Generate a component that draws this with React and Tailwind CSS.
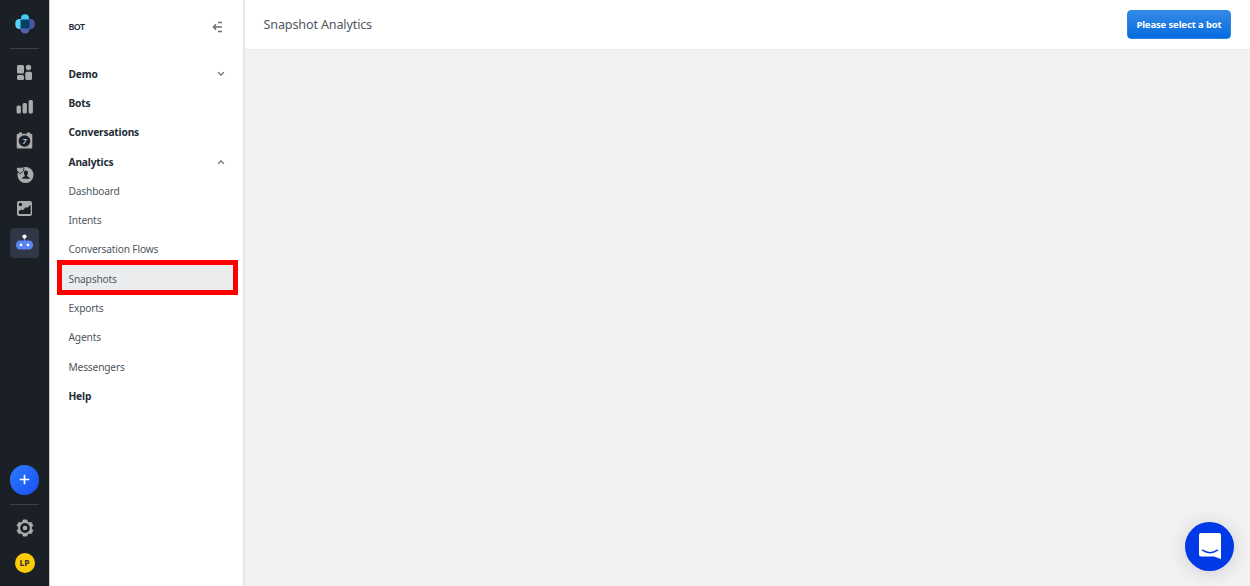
import React, { useState } from 'react';

const menu = [
	{ name: 'Demo', bold: true, arrow: 'down' },
	{ name: 'Bots', bold: true },
	{ name: 'Conversations', bold: true },
	{ name: 'Analytics', bold: true, arrow: 'up' },
	{ name: 'Dashboard' },
	{ name: 'Intents' },
	{ name: 'Conversation Flows' },
	{ name: 'Snapshots' },
	{ name: 'Exports' },
	{ name: 'Agents' },
	{ name: 'Messengers' },
	{ name: 'Help', bold: true },
];

function Logo() {
	return (
		<svg width="20" height="20" viewBox="0 0 20 20">
			<path d="M6 6V4.500Q6 .3 10 .3T14 4.500V6z" fill="#45c8f5" />
			<path d="M6 5H4.500Q.2 5 .2 10T4.500 15H6z" fill="#5ad0f4" />
			<path d="M14 5h1.500Q19.800 5 19.800 10T15.500 15H14z" fill="#4a55a5" />
			<path d="M5.500 14v1.500Q6 19.500 10 19.500T14.500 15.500V14z" fill="#5262b5" />
			<rect x="5.500" y="5.500" width="9" height="9" rx="1" fill="#044066" />
		</svg>
	);
}

function DashboardIcon() {
	return (
		<svg width="17" height="17" viewBox="0 0 17 17" fill="#a9abad">
			<rect x="1" y="1" width="7" height="8.500" rx="1.500" />
			<circle cx="12.500" cy="3.500" r="2.700" />
			<rect x="1" y="11" width="7" height="5" rx="1.500" />
			<rect x="9.300" y="7.800" width="6.700" height="8.200" rx="1.500" />
		</svg>
	);
}

function BarsIcon() {
	return (
		<svg width="17" height="17" viewBox="0 0 17 17" fill="#a9abad">
			<rect x=".6" y="7.500" width="4.300" height="8" rx="1.500" />
			<rect x="6.600" y="5" width="4.300" height="10.500" rx="1.500" />
			<rect x="12.600" y="2" width="4.300" height="13.500" rx="1.500" />
		</svg>
	);
}

function CalendarIcon() {
	return (
		<span className="relative flex h-[17px] w-[17px] items-center justify-center">
			<svg className="absolute inset-0" width="17" height="17" viewBox="0 0 17 17">
				<path
					d="M2 1.800h1V.500h3v1.300h5V.500h3v1.300h1q1.300 0 1.300 1.300v12.100q0 1.300-1.300 1.300H2q-1.300 0-1.300-1.300V3.100Q.7 1.800 2 1.800z"
					fill="#a9abad"
				/>
				<circle cx="8.500" cy="9" r="5.800" fill="#1b2027" />
			</svg>
			<span className="relative top-[0.5px] text-[7.5px] leading-none font-bold text-[#a9bdd5] italic">7</span>
		</span>
	);
}

function AudienceIcon() {
	return (
		<svg width="18" height="18" viewBox="0 0 18 18">
			<circle cx="9.500" cy="9" r="8" fill="#a9abad" />
			<path
				d="M9.900 4.500q2.100 0 2.100 2.300 0 1.700-1 2.700v.7l1.700.8q1 .5 1 1.800H6.100q0-1.300 1-1.800l1.700-.8v-.7q-1-1-1-2.700 0-2.300 2.100-2.300z"
				fill="#1b2027"
			/>
			<path
				d="M4.200 7.800L.9 4.800Q-.3 2.400 1.700 1.200 3.300.8 4.200 2q.9-1.200 2.500-.8Q8.700 2.400 7.500 4.800z"
				fill="#a9abad"
				stroke="#1b2027"
				strokeWidth=".9"
			/>
		</svg>
	);
}

function PictureIcon() {
	return (
		<svg width="17" height="17" viewBox="0 0 17 17">
			<rect x="1" y="1" width="15" height="15" rx="2" fill="#a9abad" />
			<path d="M2.800 11L5.500 9.500l1.500.8 2.500-3 1.700.4 3.500-3V13q0 1-1 1H3.800q-1 0-1-1z" fill="#1b2027" />
			<circle cx="4.400" cy="4.500" r="1.700" fill="#1b2027" />
		</svg>
	);
}

function RobotIcon() {
	return (
		<svg width="17" height="17" viewBox="0 0 17 17">
			<rect x="7.900" y="3" width="1.200" height="5" fill="#5f8af8" />
			<circle cx="8.500" cy="2.600" r="2.100" fill="#fff" />
			<rect x=".7" y="6.400" width="15.600" height="9.200" rx="3" fill="#5983f7" />
			<rect x="0" y="8.600" width="17" height="5" rx="1.500" fill="#5983f7" />
			<circle cx="5" cy="10.900" r="1.300" fill="#fff" />
			<circle cx="12" cy="10.900" r="1.300" fill="#fff" />
		</svg>
	);
}

function GearIcon() {
	return (
		<svg width="18" height="18" viewBox="0 0 18 18">
			<path
				d="M7.200 1h3.600l.6 2.100 1.500.9 2.200-.6 1.800 3.100L15.400 8.100v1.800l1.500 1.600-1.800 3.100-2.200-.6-1.500.9-.6 2.100H7.200l-.6-2.100-1.500-.9-2.200.6-1.800-3.100 1.500-1.600V8.100L1.100 6.500l1.800-3.100 2.200.6 1.500-.9z"
				fill="#a9abad"
				stroke="#a9abad"
				strokeLinejoin="round"
			/>
			<circle cx="9" cy="9" r="3.600" fill="none" stroke="#1b2027" strokeWidth="2.600" />
		</svg>
	);
}

const railIcons = [DashboardIcon, BarsIcon, CalendarIcon, AudienceIcon, PictureIcon, RobotIcon];

function Rail() {
	return (
		<nav className="flex h-full w-[49px] shrink-0 flex-col items-center bg-[#1b2027] pt-[14px] pb-[13px]">
			<Logo />
			<div className="mt-[14px] h-px w-[29px] shrink-0 bg-[#3c4047]"></div>
			<div className="mt-[9px] flex flex-col gap-[4.9px]">
				{railIcons.map((Icon, i) => (
					<button
						key={i}
						className={`flex h-[29.2px] w-[29px] items-center justify-center rounded ${i === 5 ? 'bg-[#303745]' : ''}`}
					>
						<Icon />
					</button>
				))}
			</div>
			<button className="mt-auto flex h-[29.500px] w-[29.500px] shrink-0 items-center justify-center rounded-full bg-linear-to-br from-[#2e7bff] to-[#1b4df0]">
				<svg width="11" height="11" viewBox="0 0 11 11" stroke="#fff" strokeWidth="1.600">
					<path d="M5.500 .7v9.600M.7 5.500h9.600" />
				</svg>
			</button>
			<div className="mt-[9.500px] h-px w-[29px] shrink-0 bg-[#3c4047]"></div>
			<button className="mt-[14px]">
				<GearIcon />
			</button>
			<div className="mt-4 flex h-5 w-5 shrink-0 items-center justify-center rounded-full bg-[#fccb0a] text-[8.5px] leading-none font-bold text-[#333]">
				LP
			</div>
		</nav>
	);
}

function Chevron({ up }) {
	return (
		<svg
			width="8"
			height="6"
			viewBox="0 0 8 6"
			fill="none"
			stroke="#606468"
			strokeWidth="1.200"
			className={up ? 'rotate-180' : ''}
		>
			<path d="M1 1.200l3 3 3-3" />
		</svg>
	);
}

function Sidebar({ selected, setSelected }) {
	return (
		<aside className="flex h-full w-[196px] shrink-0 flex-col border-r-2 border-l border-r-[#e6e7e9] border-l-[#c9cbcd] bg-white">
			<header className="flex h-[54px] shrink-0 items-center justify-between pr-[20px] pl-[18.5px]">
				<p className="pt-px text-[8.8px] font-semibold tracking-[-0.5px] text-[#222b36]">BOT</p>
				<svg width="11" height="12" viewBox="0 0 11 12" fill="none" stroke="#6b6e72" strokeWidth="1.500">
					<path d="M6 1.500h4M2 6h8M6 10.500h4M4 3.300L1.500 6 4 8.700" />
				</svg>
			</header>
			<div className="mt-[5.600px] flex flex-col pr-[9px] pl-[10px]">
				{menu.map(item => (
					<button
						key={item.name}
						onClick={() => setSelected(item.name)}
						className={`flex h-[29.28px] items-center justify-between pr-[9px] pl-[8.5px] text-left whitespace-nowrap ${
							item.bold
								? 'text-[10.2px] font-bold tracking-[-0.17px] text-[#222b36]'
								: 'text-[10.2px] tracking-[-0.17px] text-[#50565e]'
						} ${selected === item.name ? 'bg-[#ebecee]' : ''}`}
					>
						<span className="pt-[0.6px]">{item.name}</span>
						{item.arrow && <Chevron up={item.arrow === 'up'} />}
					</button>
				))}
			</div>
		</aside>
	);
}

function App() {
	const [selected, setSelected] = useState('Snapshots');

	return (
		<div className="relative flex h-screen w-full overflow-hidden bg-[#f2f2f4] font-['Noto_Sans','Open_Sans',sans-serif]">
			<Rail />
			<Sidebar selected={selected} setSelected={setSelected} />
			<main className="flex flex-1 flex-col">
				<header className="flex h-[50px] items-center justify-between border-b border-[#e9eaec] bg-white pr-[19px] pl-[18.5px]">
					<h1 className="pt-[2px] text-[12.6px] tracking-[-0.15px] text-[#50565e]">Snapshot Analytics</h1>
					<button className="h-[29px] w-[104px] rounded border border-[#2c86e2] bg-linear-to-b from-[#328ae6] to-[#006bdf] pt-px text-[9.5px] font-bold tracking-[-0.13px] whitespace-nowrap text-white">
						Please select a bot
					</button>
				</header>
			</main>

			{/* Highlight around the selected menu item */}
			<div className="pointer-events-none absolute top-[260px] left-[57px] h-[35px] w-[181px] border-[5px] border-[#ff0000]"></div>

			{/* Chat launcher */}
			<button className="absolute right-4 bottom-[15.500px] flex h-[49px] w-[49px] items-center justify-center rounded-full bg-[#0039e6] shadow-[0_2px_20px_rgba(0,0,0,0.15)]">
				<svg width="24" height="28" viewBox="0 0 24 28">
					<path d="M3 1h18q2 0 2 2v24l-7-2.500H3q-2 0-2-2V3q0-2 2-2z" fill="#fff" />
					<path d="M4.500 18.200q7.500 5 15 0" fill="none" stroke="#0039e6" strokeWidth="1.500" strokeLinecap="round" />
				</svg>
			</button>
		</div>
	);
}

export default App;
